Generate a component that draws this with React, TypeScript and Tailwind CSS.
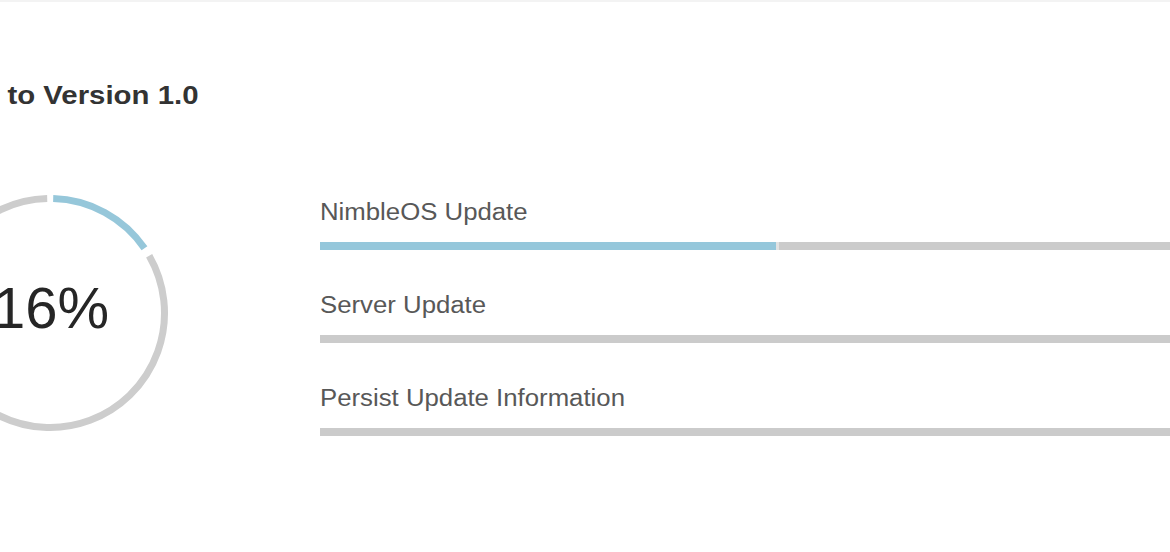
import React from "react";

function arc(cx: number, cy: number, r: number, a1: number, a2: number) {
  const rad = (d: number) => (d * Math.PI) / 180;
  const x1 = cx + r * Math.sin(rad(a1));
  const y1 = cy - r * Math.cos(rad(a1));
  const x2 = cx + r * Math.sin(rad(a2));
  const y2 = cy - r * Math.cos(rad(a2));
  const large = a2 - a1 > 180 ? 1 : 0;
  return `M ${x1.toFixed(2)} ${y1.toFixed(2)} A ${r} ${r} 0 ${large} 1 ${x2.toFixed(2)} ${y2.toFixed(2)}`;
}

function Ring() {
  return (
    <div className="relative w-[240px] h-[240px] shrink-0">
      <svg width="240" height="240" viewBox="0 0 240 240" className="absolute inset-0">
        <path d={arc(120, 120, 114.5, 60, 358.6)} fill="none" stroke="#cdcdcd" strokeWidth="7" />
        <path d={arc(120, 120, 114.5, 1.6, 55.6)} fill="none" stroke="#96c7da" strokeWidth="7" />
      </svg>
      <div className="absolute inset-0 flex items-center justify-center">
        <span className="text-[58px] leading-[58px] text-[#262626] mt-[-10px] ml-[2px]">16%</span>
      </div>
    </div>
  );
}

function Bar({ label, fill }: { label: string; fill?: number }) {
  return (
    <div className="flex flex-col">
      <div className="h-[23px] whitespace-nowrap">
        <span className="inline-block origin-left scale-x-[1.12] text-[23px] leading-[23px] text-[#585858]">
          {label}
        </span>
      </div>
      <div className="mt-[18px] h-[8px] flex bg-[#cbcbcb]">
        {fill ? (
          <>
            <div className="h-full bg-[#95c7db]" style={{ width: fill }} />
            <div className="h-full w-[3px] bg-[#e2e2e2]" />
          </>
        ) : null}
      </div>
    </div>
  );
}

export default function App() {
  return (
    <div className="w-[1170px] h-[552px] overflow-hidden bg-white font-['Liberation_Sans',Arial,sans-serif]">
      <div className="h-[2px] bg-[#f3f3f3]" />
      <div className="mt-[80px] ml-[-128px] h-[26px] whitespace-nowrap">
        <span className="inline-block origin-left scale-x-[1.13] text-[26px] leading-[26px] font-bold text-[#333333]">
          Updating to Version 1.0
        </span>
      </div>
      <div className="mt-[85px] ml-[-70px] flex">
        <Ring />
        <div className="ml-[150px] w-[930px] shrink-0 pt-[8px] flex flex-col gap-[44px]">
          <Bar label="NimbleOS Update" fill={456} />
          <Bar label="Server Update" />
          <Bar label="Persist Update Information" />
        </div>
      </div>
    </div>
  );
}
